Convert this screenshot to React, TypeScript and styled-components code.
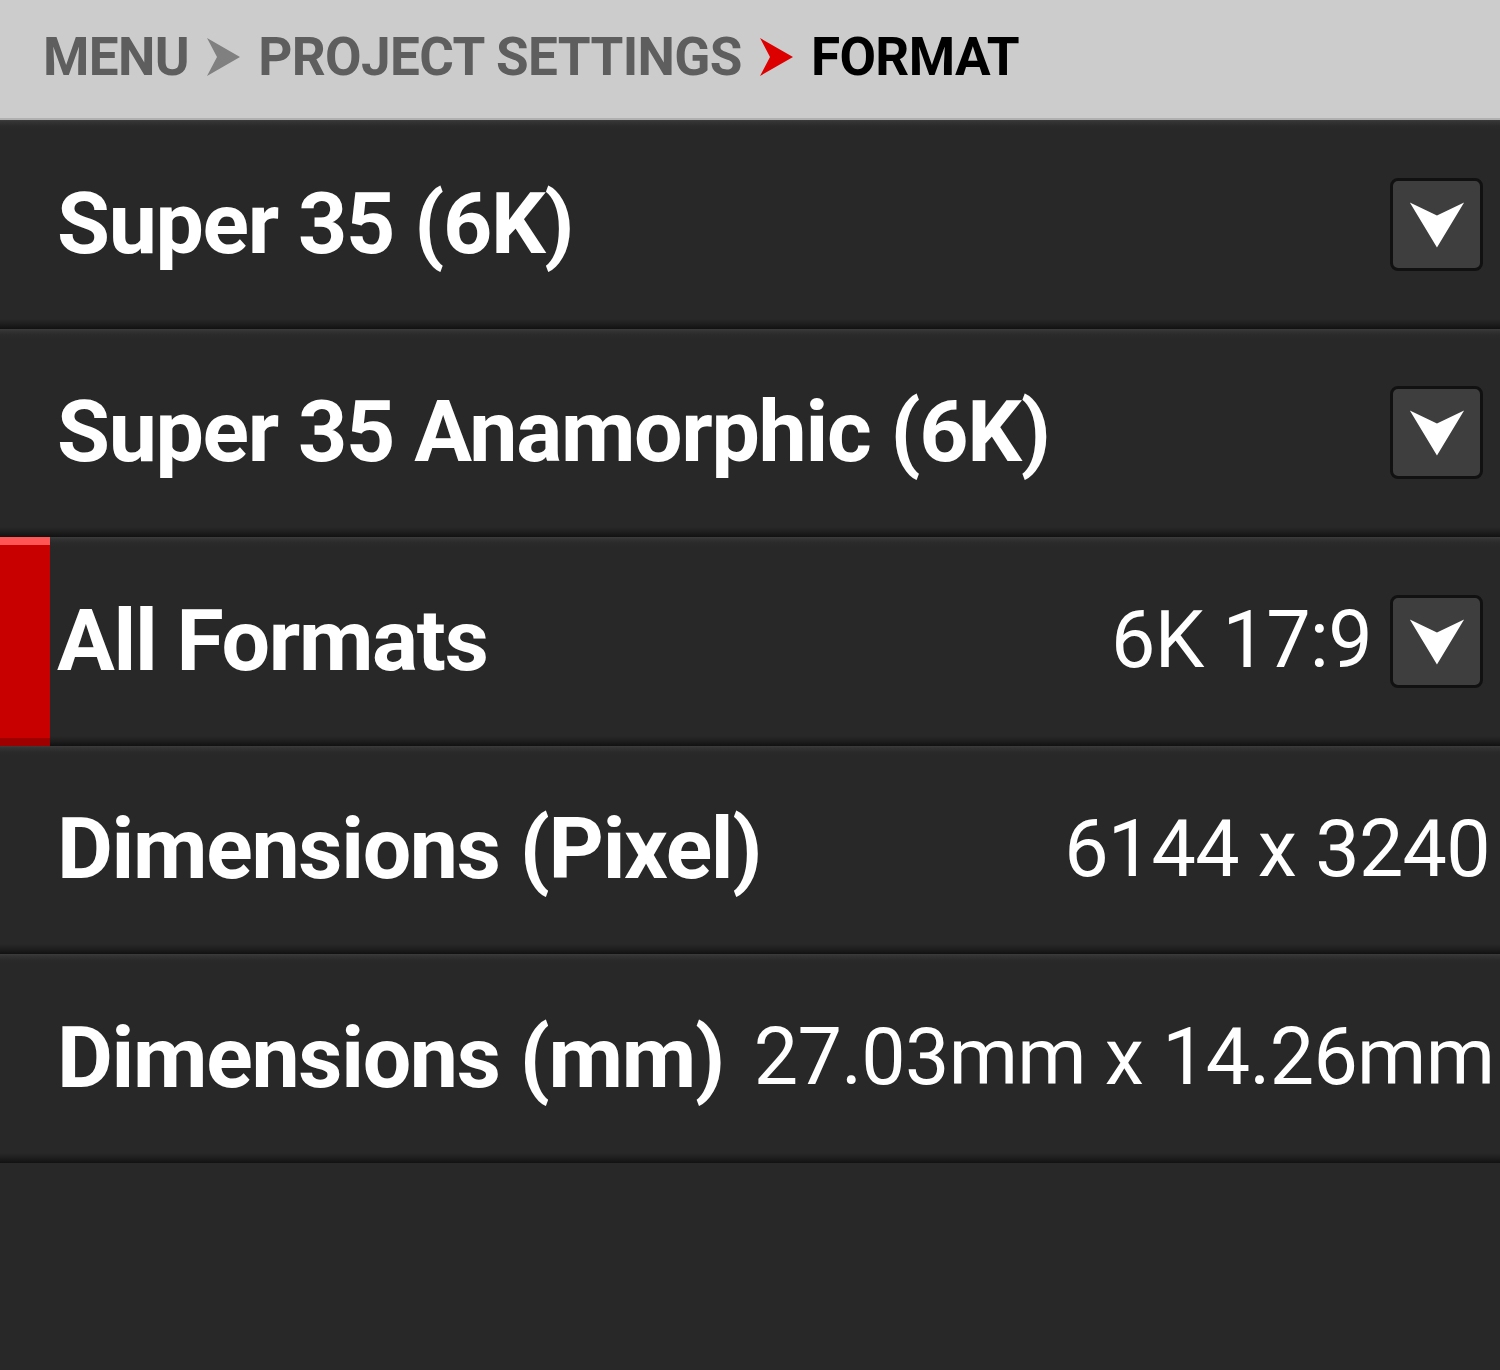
import React from 'react';
import styled, { createGlobalStyle } from 'styled-components';

const GlobalStyle = createGlobalStyle`
	html, body {
		margin: 0;
		padding: 0;
		background: #282828;
	}
	body {
		font-family: Roboto, 'Liberation Sans', sans-serif;
	}
`;

const Screen = styled.div`
	width: 1500px;
	height: 1370px;
	display: flex;
	flex-direction: column;
	background: #282828;
	overflow: hidden;
`;

const Breadcrumb = styled.div`
	height: 120px;
	flex-shrink: 0;
	display: flex;
	align-items: center;
	gap: 18px;
	padding: 0 0 4px 43px;
	background: #cccccc;
	border-bottom: 2px solid #b0b0b0;
	box-sizing: border-box;
`;

const Crumb = styled.span<{ $current?: boolean }>`
	font-size: 53px;
	font-weight: 700;
	letter-spacing: -0.6px;
	color: ${({ $current }) => ($current ? '#000000' : '#5e5e5e')};
`;

const CrumbArrow = ({ color }: { color: string }) => (
	<svg width="33" height="38" viewBox="0 0 33 38">
		<path d="M0 0 L33 19 L0 38 L10 19 Z" fill={color} />
	</svg>
);

const List = styled.div`
	display: flex;
	flex-direction: column;
`;

const Row = styled.div`
	position: relative;
	height: 208.5px;
	display: flex;
	align-items: center;
	justify-content: space-between;
	gap: 30px;
	padding: 0 10px 0 57px;
	box-sizing: border-box;
	background: linear-gradient(
		to bottom,
		#3c3c3c 0,
		#333333 2px,
		#2a2a2a 6px,
		#282828 10px,
		#282828 calc(100% - 10px),
		#1e1e1e calc(100% - 5px),
		#111111 100%
	);
`;

const SelectedMark = styled.div`
	position: absolute;
	left: 0;
	top: 0;
	bottom: 0;
	width: 50px;
	background: linear-gradient(
		to bottom,
		#ff5555 0,
		#ff5555 8px,
		#c80000 8px,
		#c80000 calc(100% - 8px),
		#9e0000 calc(100% - 8px)
	);
`;

const Label = styled.span`
	position: relative;
	font-size: 86px;
	font-weight: 700;
	color: #ffffff;
	white-space: nowrap;
	letter-spacing: -1.3px;
	margin-top: -2px;
`;

const ValueGroup = styled.div`
	display: flex;
	align-items: center;
	gap: 18px;
`;

const Value = styled.span`
	font-size: 79px;
	font-weight: 400;
	color: #ffffff;
	white-space: nowrap;
	letter-spacing: -0.7px;
	margin-top: -2px;
`;

const DropButton = styled.div`
	width: 93px;
	height: 93px;
	box-sizing: border-box;
	border: 3px solid #111111;
	border-radius: 8px;
	background: #3e3e3e;
	display: flex;
	align-items: center;
	justify-content: center;
	margin-right: 7px;
`;

const DownArrow = () => (
	<svg width="93" height="93" viewBox="0 0 93 93">
		<path d="M18 23 L47 37 L76 23 L47 71 Z" fill="#ffffff" />
	</svg>
);

type FormatRow = {
	label: string;
	value?: string;
	dropdown?: boolean;
	selected?: boolean;
};

const rows: FormatRow[] = [
	{ label: 'Super 35 (6K)', dropdown: true },
	{ label: 'Super 35 Anamorphic (6K)', dropdown: true },
	{ label: 'All Formats', value: '6K 17:9', dropdown: true, selected: true },
	{ label: 'Dimensions (Pixel)', value: '6144 x 3240' },
	{ label: 'Dimensions (mm)', value: '27.03mm x 14.26mm' },
];

export default function App() {
	return (
		<>
			<GlobalStyle />
			<Screen>
				<Breadcrumb>
					<Crumb>MENU</Crumb>
					<CrumbArrow color="#808080" />
					<Crumb>PROJECT SETTINGS</Crumb>
					<CrumbArrow color="#dd0000" />
					<Crumb $current>FORMAT</Crumb>
				</Breadcrumb>
				<List>
					{rows.map((row) => (
						<Row key={row.label}>
							{row.selected && <SelectedMark />}
							<Label>{row.label}</Label>
							<ValueGroup>
								{row.value && <Value>{row.value}</Value>}
								{row.dropdown && (
									<DropButton>
										<DownArrow />
									</DropButton>
								)}
							</ValueGroup>
						</Row>
					))}
				</List>
			</Screen>
		</>
	);
}
